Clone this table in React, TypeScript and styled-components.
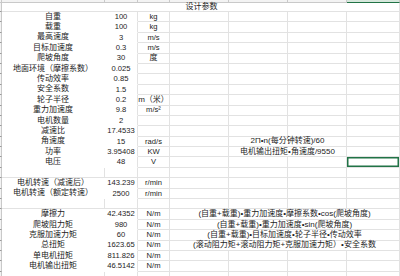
import React from "react";
import styled, { createGlobalStyle } from "styled-components";

const GlobalStyle = createGlobalStyle`
  html, body {
    margin: 0;
    padding: 0;
    background: #fff;
  }
`;

const line = "#e2e2e2";
const headLine = "#c9c9c9";

const Sheet = styled.div`
  display: grid;
  grid-template-columns: 2px 103px 33px 32px 59px 59px 59px 53px;
  grid-template-rows: 3px 9px repeat(26, 10.4px);
  width: 400px;
  height: 276px;
  overflow: hidden;
  background: #fff;
  color: #1c1c1c;
  font-family: "Liberation Sans", "Noto Sans CJK SC", sans-serif;
`;

const ColHead = styled.div<{ $active?: boolean }>`
  box-sizing: border-box;
  background: ${(p) => (p.$active ? "#d6e7dc" : "#f3f3f3")};
  border-right: 1px solid ${headLine};
  border-bottom: 1px solid ${(p) => (p.$active ? "#217346" : headLine)};
`;

const RowHead = styled.div`
  box-sizing: border-box;
  background: #f3f3f3;
  border-right: 1px solid ${headLine};
  border-bottom: 1px solid #9a9a9a;
`;

const Cell = styled.div<{
  $span?: number;
  $right?: boolean;
  $bottom?: boolean;
  $selected?: boolean;
  $cjk?: boolean;
}>`
  grid-column: span ${(p) => p.$span ?? 1};
  display: flex;
  align-items: center;
  justify-content: center;
  min-width: 0;
  box-sizing: border-box;
  white-space: nowrap;
  font-size: ${(p) => (p.$cjk ? "8px" : "7.6px")};
  line-height: 1;
  border-right: 1px solid ${(p) => (p.$right === false ? "transparent" : line)};
  border-bottom: 1px solid ${(p) => (p.$bottom === false ? "transparent" : line)};
  box-shadow: ${(p) => (p.$selected ? "inset 0 0 0 1.5px #217346" : "none")};
`;

const Title = styled(Cell)`
  grid-column: 2 / span 7;
  font-size: 8px;
  padding-left: 2px;
`;

type Row = {
  label?: string;
  value?: string;
  unit?: string;
  formula?: string;
  wide?: boolean;
  selected?: boolean;
};

const rows: Row[] = [
  { label: "自重", value: "100", unit: "kg" },
  { label: "载重", value: "100", unit: "kg" },
  { label: "最高速度", value: "3", unit: "m/s" },
  { label: "目标加速度", value: "0.3", unit: "m/s" },
  { label: "爬坡角度", value: "30", unit: "度" },
  { label: "地面环境（摩擦系数）", value: "0.025" },
  { label: "传动效率", value: "0.85" },
  { label: "安全系数", value: "1.5" },
  { label: "轮子半径", value: "0.2", unit: "m（米）" },
  { label: "重力加速度", value: "9.8", unit: "m/s²" },
  { label: "电机数量", value: "2" },
  { label: "减速比", value: "17.4533" },
  { label: "角速度", value: "15", unit: "rad/s", formula: "2Π•n(每分钟转速)/60" },
  { label: "功率", value: "3.95408", unit: "KW", formula: "电机输出扭矩•角速度/9550" },
  { label: "电压", value: "48", unit: "V", selected: true },
  {},
  { label: "电机转速（减速后）", value: "143.239", unit: "r/min" },
  { label: "电机转速（额定转速）", value: "2500", unit: "r/min" },
  {},
  {
    label: "摩擦力",
    value: "42.4352",
    unit: "N/m",
    formula: "(自重+载重)•重力加速度•摩擦系数•cos(爬坡角度)",
    wide: true,
  },
  {
    label: "爬坡阻力矩",
    value: "980",
    unit: "N/m",
    formula: "(自重+载重)•重力加速度•sin(爬坡角度)",
    wide: true,
  },
  {
    label: "克服加速力矩",
    value: "60",
    unit: "N/m",
    formula: "(自重+载重)•目标加速度•轮子半径•传动效率",
    wide: true,
  },
  {
    label: "总扭矩",
    value: "1623.65",
    unit: "N/m",
    formula: "(滚动阻力矩+滚动阻力矩+克服加速力矩）•安全系数",
    wide: true,
  },
  { label: "单电机扭矩", value: "811.826", unit: "N/m" },
  { label: "电机输出扭矩", value: "46.5142", unit: "N/m" },
  {},
];

const SheetRow: React.FC<{ row: Row }> = ({ row }) => {
  const filled = row.label !== undefined;
  const tail = () => {
    if (row.formula && row.wide) {
      return (
        <Cell $span={4} $cjk>
          {row.formula}
        </Cell>
      );
    }
    if (row.formula) {
      return (
        <>
          <Cell />
          <Cell $span={2} $cjk>
            {row.formula}
          </Cell>
          <Cell />
        </>
      );
    }
    return (
      <>
        <Cell />
        <Cell />
        <Cell />
        <Cell $selected={row.selected} />
      </>
    );
  };

  return (
    <>
      <RowHead />
      <Cell $cjk $right={!filled} $bottom={!filled}>
        {row.label}
      </Cell>
      <Cell $bottom={!filled}>{row.value}</Cell>
      <Cell $cjk={row.unit === "度" || row.unit === "m（米）"}>{row.unit}</Cell>
      {tail()}
    </>
  );
};

export default function App() {
  return (
    <>
      <GlobalStyle />
      <Sheet>
        <ColHead />
        <ColHead />
        <ColHead />
        <ColHead />
        <ColHead />
        <ColHead />
        <ColHead />
        <ColHead $active />
        <RowHead />
        <Title $cjk>设计参数</Title>
        {rows.map((row, i) => (
          <SheetRow key={i} row={row} />
        ))}
      </Sheet>
    </>
  );
}
